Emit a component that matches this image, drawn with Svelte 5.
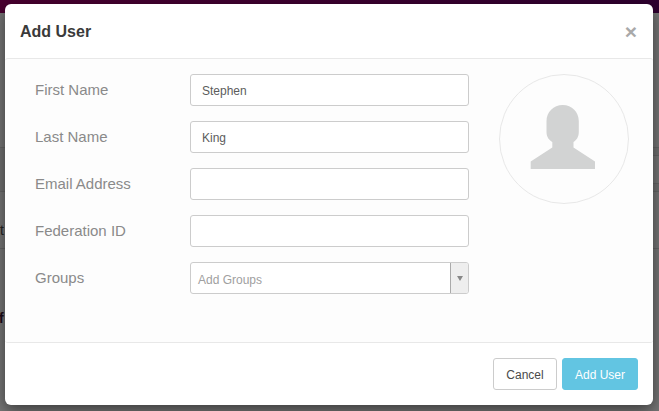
<script>
  const fields = [
    { label: 'First Name', value: 'Stephen' },
    { label: 'Last Name', value: 'King' },
    { label: 'Email Address', value: '' },
    { label: 'Federation ID', value: '' }
  ];
</script>

<div class="page">
  <div class="under">
    <div class="topbar"></div>
    <div class="band one"></div>
    <div class="band two"><div class="cell"></div></div>
    <div class="band three"><span>t</span></div>
    <div class="band four"><span>f</span></div>
  </div>

  <div class="modal">
    <header>
      <h2>Add User</h2>
      <span class="close">×</span>
    </header>
    <main>
      <form>
        {#each fields as f}
          <div class="row">
            <label for={f.label}>{f.label}</label>
            <input id={f.label} type="text" value={f.value} />
          </div>
        {/each}
        <div class="row">
          <span class="lab">Groups</span>
          <div class="select">
            <span class="ph">Add Groups</span>
            <span class="arrow"><i></i></span>
          </div>
        </div>
      </form>
      <div class="avatar">
        <svg width="128" height="128" viewBox="1 1 128 128">
          <path d="M63.7 31C73 31 79.8 38 79.8 47V58C79.8 63 77.5 66 74.5 68V73.5L96 87.5V95H31.7V87.5L53.3 73.5V68C50 66 47.5 63 47.5 58V47C47.5 38 54.5 31 63.7 31Z" fill="#d2d3d3"/>
        </svg>
      </div>
    </main>
    <footer>
      <button class="cancel" type="button">Cancel</button>
      <button class="add" type="button">Add User</button>
    </footer>
  </div>
</div>

<style>
  :global(body) { margin: 0; background: #767676; }
  .page {
    position: relative;
    width: 659px;
    height: 411px;
    overflow: hidden;
    background: #767676;
    font-family: "Liberation Sans", Arial, sans-serif;
  }
  .under { display: flex; flex-direction: column; }
  .topbar {
    height: 13px;
    background: linear-gradient(90deg, #4a0030, #2f0030);
  }
  .band { border-bottom: 1px solid #666; color: #222; font-size: 14px; }
  .one { height: 134px; }
  .two { height: 43px; background: #707070; display: flex; justify-content: flex-end; align-items: center; }
  .cell {
    width: 6px;
    height: 27px;
    border-top: 1px solid #666;
    border-bottom: 1px solid #666;
    background: #767676;
  }
  .three { height: 56px; position: relative; }
  .four { height: 60px; position: relative; border: 0; }
  .band span { position: absolute; }
  .three span { left: 0; top: 30px; }
  .four span { left: -1px; top: 61px; font-weight: 700; color: #1c0a18; }

  .modal {
    position: absolute;
    left: 5px;
    top: 4px;
    width: 648px;
    height: 401px;
    display: flex;
    flex-direction: column;
    background: #fff;
    border-radius: 6px;
    box-shadow: 0 5px 15px rgba(0, 0, 0, 0.5);
  }
  header {
    height: 54px;
    flex: none;
    display: flex;
    align-items: center;
    justify-content: space-between;
    padding: 0 16px 0 15px;
  }
  h2 {
    margin: 0;
    padding-top: 2px;
    font-size: 16px;
    font-weight: 700;
    color: #3a3a3a;
  }
  .close {
    font-size: 21px;
    font-weight: 700;
    color: #a9a9a9;
    line-height: 21px;
  }
  main {
    flex: 1;
    display: flex;
    gap: 30px;
    padding: 15px 0 0 30px;
    background: #fdfdfd;
    border-top: 1px solid #e8e8e8;
    border-bottom: 1px solid #e8e8e8;
    border-radius: 3px;
  }
  form { display: flex; flex-direction: column; gap: 15px; }
  .row { display: flex; align-items: center; height: 32px; }
  label, .lab {
    width: 155px;
    padding-bottom: 2px;
    font-size: 15px;
    color: #8a8a8a;
    flex: none;
  }
  input, .select {
    width: 279px;
    height: 32px;
    box-sizing: border-box;
    border: 1px solid #ccc;
    border-radius: 3px;
    background: #fff;
  }
  input {
    padding: 2px 11px 0;
    font: 12px "Liberation Sans", Arial, sans-serif;
    color: #5c5c5c;
    outline: none;
    margin: 0;
  }
  .select { display: flex; align-items: center; justify-content: space-between; padding-left: 7px; }
  .ph { font-size: 12px; color: #a0a0a0; padding-top: 4px; }
  .arrow {
    width: 17px;
    height: 30px;
    background: #eee;
    border-left: 1px solid #aaa;
    border-radius: 0 2px 2px 0;
    display: flex;
    align-items: center;
    justify-content: center;
  }
  .arrow i {
    display: block;
    width: 0;
    height: 0;
    border-left: 3px solid transparent;
    border-right: 3px solid transparent;
    border-top: 5px solid #888;
  }
  .avatar {
    width: 130px;
    height: 130px;
    box-sizing: border-box;
    border: 1px solid #e8e8e8;
    border-radius: 50%;
    flex: none;
  }
  .avatar svg { display: block; }
  footer {
    height: 62px;
    flex: none;
    box-sizing: border-box;
    padding: 15px;
    display: flex;
    justify-content: flex-end;
    gap: 5px;
  }
  button {
    height: 32px;
    margin: 0;
    font: 12px "Liberation Sans", Arial, sans-serif;
    border-radius: 3px;
    padding: 2px 0 0;
    box-sizing: border-box;
  }
  .cancel { width: 64px; background: #fff; border: 1px solid #ccc; color: #4a4a4a; }
  .add { width: 76px; background: #62c5e2; border: 1px solid #62c5e2; color: #fff; }
</style>
